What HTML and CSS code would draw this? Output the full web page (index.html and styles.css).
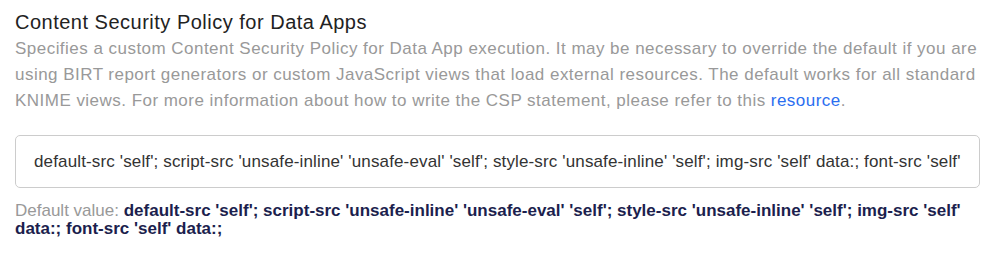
FILE: index.html
```html
<!DOCTYPE html>
<html lang="en">
<head>
    <meta charset="UTF-8">
    <title>Content Security Policy for Data Apps</title>
    <link rel="stylesheet" href="styles.css">
</head>
<body>
    <div class="setting">
        <h3 class="setting-title">Content Security Policy for Data Apps</h3>
        <p class="setting-desc">
            Specifies a custom Content Security Policy for Data App execution. It may be necessary to override the default if you are<br>
            using BIRT report generators or custom JavaScript views that load external resources. The default works for all standard<br>
            KNIME views. For more information about how to write the CSP statement, please refer to this <a href="#">resource</a>.
        </p>
        <input type="text" class="setting-input" value="default-src 'self'; script-src 'unsafe-inline' 'unsafe-eval' 'self'; style-src 'unsafe-inline' 'self'; img-src 'self' data:; font-src 'self' data:;">
        <p class="setting-default">
            <span class="default-label">Default value:</span>
            <span class="default-value">default-src 'self'; script-src 'unsafe-inline' 'unsafe-eval' 'self'; style-src 'unsafe-inline' 'self'; img-src 'self'<br>data:; font-src 'self' data:;</span>
        </p>
    </div>
</body>
</html>
```

FILE: styles.css
```css
body {
    margin: 0;
    background-color: #fff;
    font-family: "Liberation Sans", Arial, sans-serif;
}
.setting {
    padding: 10px 20px 0 15px;
}
.setting-title {
    margin: 0 0 1px;
    font-size: 20px;
    font-weight: normal;
    line-height: 25px;
    letter-spacing: 0.5px;
    color: #222;
}
.setting-desc {
    margin: 0;
    font-size: 17px;
    line-height: 26px;
    letter-spacing: 0.47px;
    color: #999;
    white-space: nowrap;
}
.setting-desc a {
    color: #2a6ef0;
    text-decoration: none;
}
.setting-input {
    display: block;
    box-sizing: border-box;
    width: 100%;
    height: 53px;
    margin-top: 21px;
    padding: 0 18px;
    border: 1px solid #ccc;
    border-radius: 5px;
    font-family: inherit;
    font-size: 17px;
    letter-spacing: 0.14px;
    color: #333;
}
.setting-default {
    margin: 14px 0 0;
    font-size: 17px;
    line-height: 18px;
    letter-spacing: 0;
    white-space: nowrap;
}
.default-label {
    color: #999;
}
.default-value {
    color: #1c1f4e;
    font-weight: bold;
}
```
